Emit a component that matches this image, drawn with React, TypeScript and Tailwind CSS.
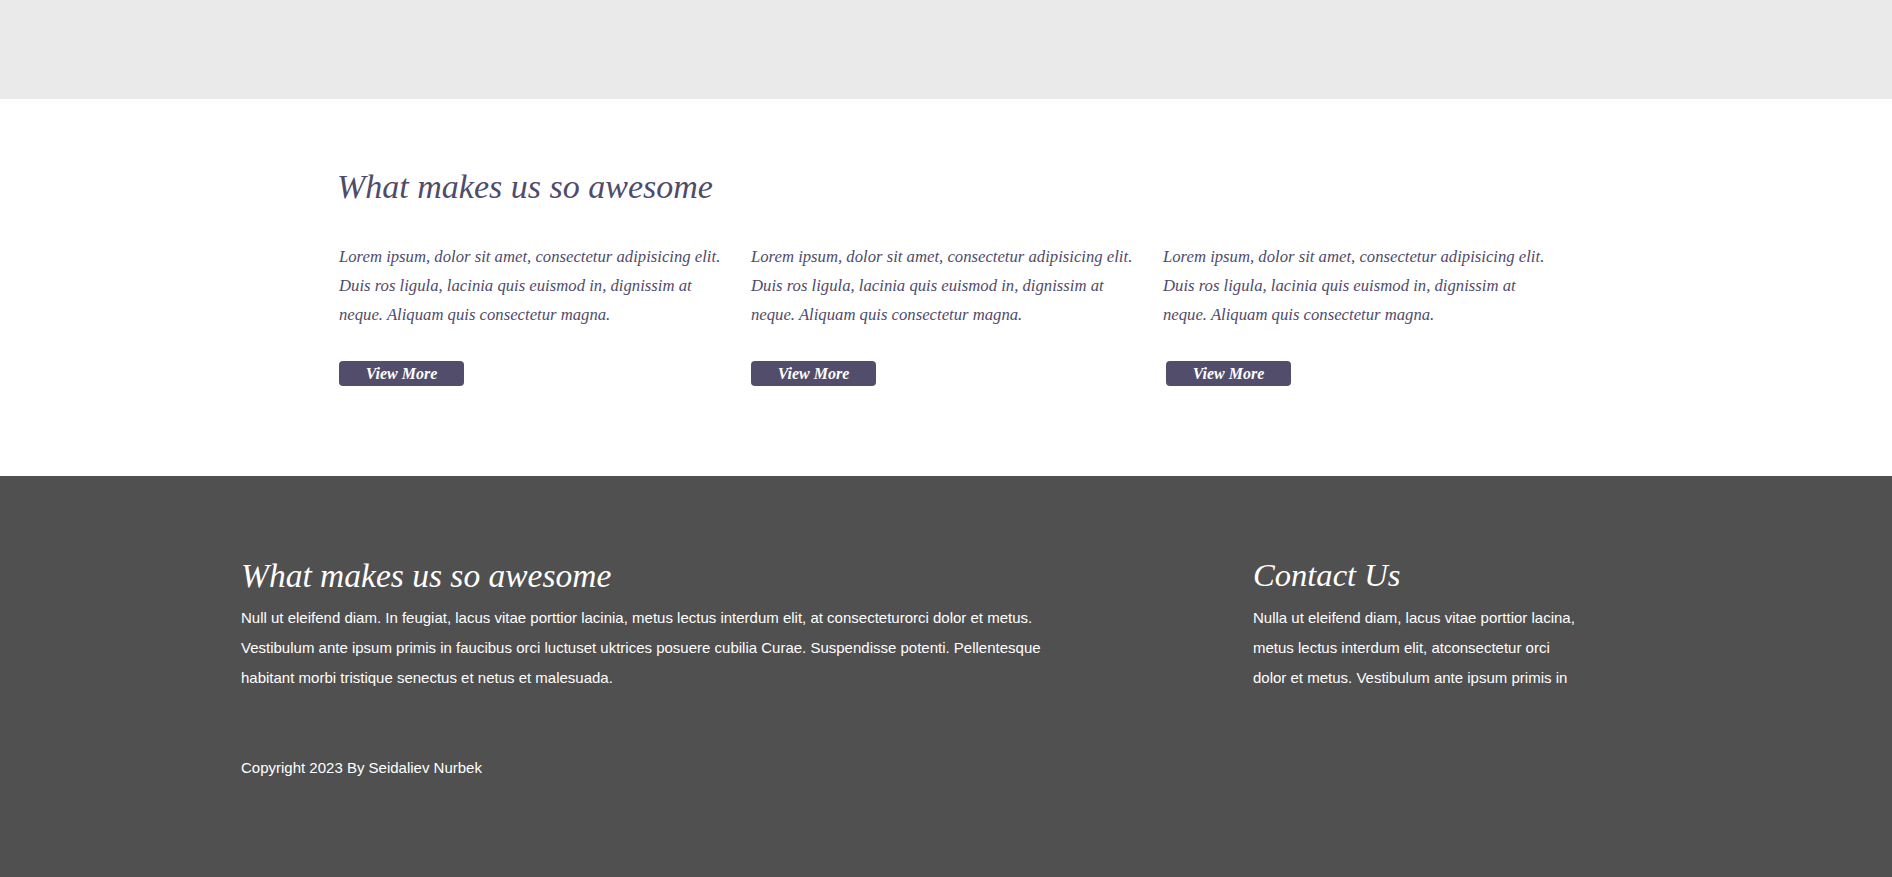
import React from "react";

const serif = { fontFamily: '"Liberation Serif", "DejaVu Serif", serif' };
const sans = { fontFamily: '"Liberation Sans", Arial, sans-serif' };

const features = [
  { id: 1, shift: "" },
  { id: 2, shift: "" },
  { id: 3, shift: "ml-[3px]" },
];

const Feature = ({ shift }: { shift: string }) => {
  return (
    <div className="w-[412px]">
      <p className="text-[16.7px] leading-[29px] italic text-[#4f4b6b] whitespace-nowrap">
        Lorem ipsum, dolor sit amet, consectetur adipisicing elit.
        <br />
        Duis ros ligula, lacinia quis euismod in, dignissim at
        <br />
        neque. Aliquam quis consectetur magna.
      </p>
      <button
        className={`mt-[32px] ${shift} w-[125px] h-[25px] rounded-[4px] bg-[#514d6b] text-white italic font-bold text-[16px] leading-[25px]`}
        style={serif}
      >
        View More
      </button>
    </div>
  );
};

const App = () => {
  return (
    <div className="w-full min-h-screen bg-white">
      {/* top band */}
      <div className="h-[99px] bg-[#eaeaea]" />

      {/* features */}
      <section className="h-[377px] bg-white pt-[68px] pl-[337px]" style={serif}>
        <h2 className="text-[34px] leading-[40px] italic text-[#4f4b6b]">
          What makes us so awesome
        </h2>
        <div className="mt-[35px] ml-[2px] flex">
          {features.map((f) => (
            <Feature key={f.id} shift={f.shift} />
          ))}
        </div>
      </section>

      {/* footer */}
      <footer className="min-h-[401px] bg-[#505050] pt-[81px] pl-[241px] text-white">
        <div className="flex">
          <div className="w-[1012px]">
            <h3 className="text-[33.5px] leading-[37px] italic" style={serif}>
              What makes us so awesome
            </h3>
            <p
              className="mt-[9px] text-[15px] leading-[30px] whitespace-nowrap"
              style={sans}
            >
              Null ut eleifend diam. In feugiat, lacus vitae porttior lacinia, metus lectus interdum elit, at consecteturorci dolor et metus.
              <br />
              Vestibulum ante ipsum primis in faucibus orci luctuset uktrices posuere cubilia Curae. Suspendisse potenti. Pellentesque
              <br />
              habitant morbi tristique senectus et netus et malesuada.
            </p>
          </div>
          <div className="w-[360px]">
            <h3 className="text-[32.6px] leading-[37px] italic" style={serif}>
              Contact Us
            </h3>
            <p
              className="mt-[9px] text-[15px] leading-[30px] whitespace-nowrap"
              style={sans}
            >
              Nulla ut eleifend diam, lacus vitae porttior lacina,
              <br />
              metus lectus interdum elit, atconsectetur orci
              <br />
              dolor et metus. Vestibulum ante ipsum primis in
            </p>
          </div>
        </div>
        <p className="mt-[60px] text-[15px] leading-[30px]" style={sans}>
          Copyright 2023 By Seidaliev Nurbek
        </p>
      </footer>
    </div>
  );
};

export default App;
